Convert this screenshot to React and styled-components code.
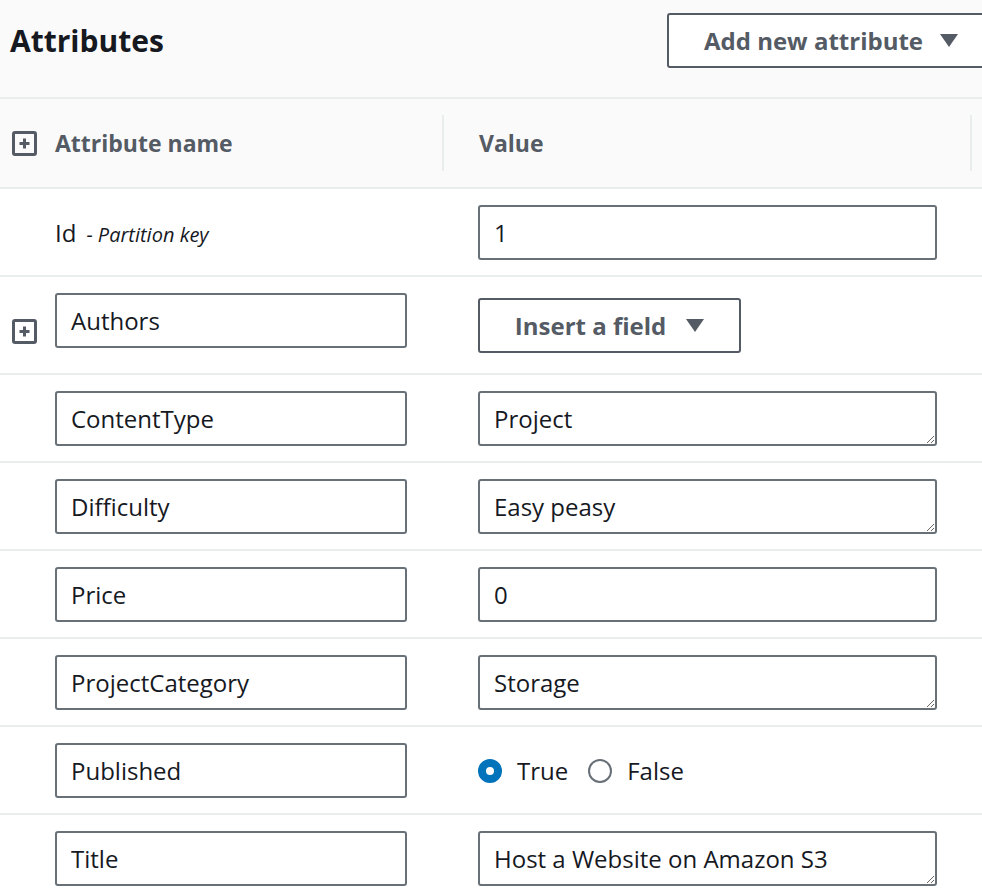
import React from "react";
import styled, { createGlobalStyle } from "styled-components";

const GlobalStyle = createGlobalStyle`
  body {
    margin: 0;
    background: #ffffff;
    overflow: hidden;
    font-family: "Open Sans", "Noto Sans", sans-serif;
    color: #16191f;
  }
`;

const Page = styled.div`
  width: 1000px;
`;

const TopBar = styled.header`
  display: flex;
  justify-content: space-between;
  align-items: flex-start;
  height: 99px;
  padding: 13px 0 0 10px;
  box-sizing: border-box;
  background: #fafafa;
  border-bottom: 2px solid #eaeded;
`;

const Title = styled.h2`
  margin: 0;
  font-size: 30px;
  line-height: 55px;
  font-weight: 700;
  color: #16191f;
`;

const DropButton = styled.button`
  display: flex;
  align-items: center;
  justify-content: ${(p) => (p.$start ? "flex-start" : "center")};
  gap: ${(p) => p.$gap || 18}px;
  width: ${(p) => p.$width}px;
  height: 55px;
  margin-top: ${(p) => p.$offset || 0}px;
  padding: 0 0 0 ${(p) => p.$padLeft || 0}px;
  box-sizing: border-box;
  background: #ffffff;
  border: 2px solid #545b64;
  border-radius: 3px;
  font-family: inherit;
  font-size: 24px;
  font-weight: 700;
  color: #545b64;
`;

const Caret = styled.span`
  width: 0;
  height: 0;
  border-left: 9px solid transparent;
  border-right: 9px solid transparent;
  border-top: 13px solid #545b64;
`;

const Row = styled.div`
  display: grid;
  grid-template-columns: 55px 387px 1fr;
  align-items: ${(p) => (p.$head ? "center" : "start")};
  padding: ${(p) => (p.$head ? "0" : "16px 0 15px")};
  height: ${(p) => (p.$head ? "88px" : "auto")};
  background: ${(p) => (p.$head ? "#fafafa" : "#ffffff")};
  border-bottom: 2px solid #eaeded;
`;

const IconCell = styled.div`
  display: flex;
  align-items: center;
  height: ${(p) => (p.$head ? "auto" : "55px")};
  padding: ${(p) => (p.$head ? "0" : "21px 0 0")};
  padding-left: 12px;
  box-sizing: border-box;
`;

const HeadLabel = styled.div`
  font-size: 23px;
  font-weight: 700;
  color: #545b64;
`;

const HeadValue = styled.div`
  display: flex;
  align-items: center;
  width: 530px;
  height: 56px;
  padding-left: 35px;
  box-sizing: border-box;
  border-left: 2px solid #eaeded;
  border-right: 2px solid #eaeded;
`;

const KeyName = styled.div`
  display: flex;
  align-items: baseline;
  height: 55px;
  line-height: 55px;
  font-size: 24px;
`;

const KeyNote = styled.span`
  margin-left: 10px;
  font-size: 20px;
  font-style: italic;
`;

const ValueCell = styled.div`
  padding-left: 36px;
  padding-bottom: ${(p) => p.$extra || 0}px;
`;

const fieldCss = `
  display: block;
  height: 55px;
  padding: 0 14px;
  box-sizing: border-box;
  background: #ffffff;
  border: 2px solid #687078;
  border-radius: 3px;
  font-family: inherit;
  font-size: 24px;
  color: #16191f;
  outline: none;
`;

const TextField = styled.input`
  ${fieldCss}
  width: ${(p) => p.$width}px;
`;

const TextArea = styled.textarea`
  ${fieldCss}
  width: 459px;
  padding-top: 10px;
  line-height: 31px;
  resize: vertical;
  overflow: hidden;
`;

const RadioGroup = styled.div`
  display: flex;
  align-items: center;
  height: 55px;
  font-size: 24px;
`;

const RadioDot = styled.span`
  width: 24px;
  height: 24px;
  box-sizing: border-box;
  border-radius: 50%;
  border: ${(p) => (p.$on ? "8px solid #0073bb" : "2px solid #687078")};
  background: #ffffff;
  margin-right: 15px;
`;

const RadioLabel = styled.span`
  margin-right: 20px;
`;

function ExpandIcon() {
  return (
    <svg width="25" height="25" viewBox="0 0 25 25">
      <rect x="1.5" y="1.5" width="22" height="22" rx="1.5" fill="none" stroke="#545b64" strokeWidth="3" />
      <path d="M12.5 7.5v10M7.5 12.5h10" stroke="#545b64" strokeWidth="3" />
    </svg>
  );
}

const rows = [
  { name: "ContentType", value: "Project", area: true },
  { name: "Difficulty", value: "Easy peasy", area: true },
  { name: "Price", value: "0" },
  { name: "ProjectCategory", value: "Storage", area: true },
];

export default function App() {
  return (
    <Page>
      <GlobalStyle />
      <TopBar>
        <Title>Attributes</Title>
        <DropButton $width={333} $start $padLeft={35} $gap={17}>
          Add new attribute <Caret />
        </DropButton>
      </TopBar>

      <Row $head>
        <IconCell $head>
          <ExpandIcon />
        </IconCell>
        <HeadLabel>Attribute name</HeadLabel>
        <HeadValue>
          <HeadLabel>Value</HeadLabel>
        </HeadValue>
      </Row>

      <Row>
        <div />
        <KeyName>
          Id<KeyNote>- Partition key</KeyNote>
        </KeyName>
        <ValueCell>
          <TextField $width={459} defaultValue="1" />
        </ValueCell>
      </Row>

      <Row>
        <IconCell>
          <ExpandIcon />
        </IconCell>
        <TextField $width={352} defaultValue="Authors" />
        <ValueCell $extra={5}>
          <DropButton $width={263} $offset={5} $gap={20}>
            Insert a field <Caret />
          </DropButton>
        </ValueCell>
      </Row>

      {rows.map((r) => (
        <Row key={r.name}>
          <div />
          <TextField $width={352} defaultValue={r.name} />
          <ValueCell>
            {r.area ? (
              <TextArea rows={1} defaultValue={r.value} />
            ) : (
              <TextField $width={459} defaultValue={r.value} />
            )}
          </ValueCell>
        </Row>
      ))}

      <Row>
        <div />
        <TextField $width={352} defaultValue="Published" />
        <ValueCell>
          <RadioGroup>
            <RadioDot $on />
            <RadioLabel>True</RadioLabel>
            <RadioDot />
            <RadioLabel>False</RadioLabel>
          </RadioGroup>
        </ValueCell>
      </Row>

      <Row>
        <div />
        <TextField $width={352} defaultValue="Title" />
        <ValueCell>
          <TextArea rows={1} defaultValue="Host a Website on Amazon S3" />
        </ValueCell>
      </Row>
    </Page>
  );
}
